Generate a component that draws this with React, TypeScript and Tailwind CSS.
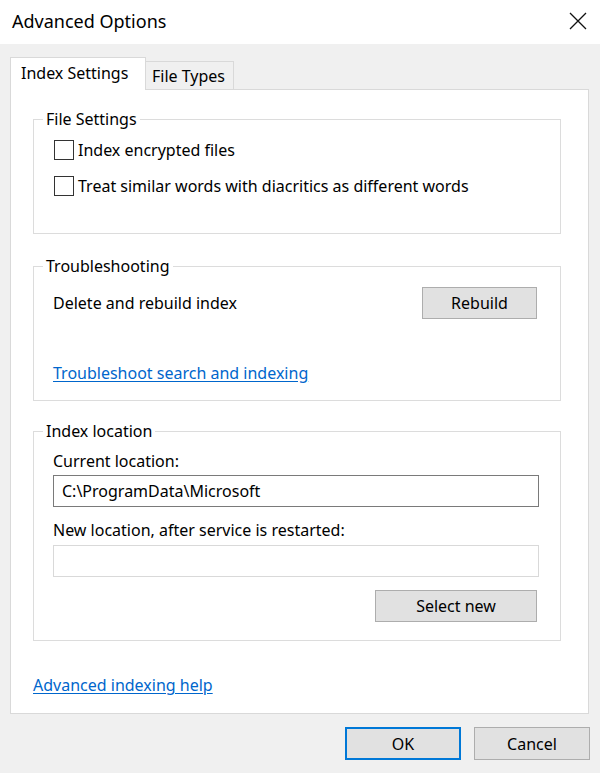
import React from "react";

const font = { fontFamily: '"Noto Sans", "Open Sans", sans-serif' };

function Checkbox({ label }: { label: string }) {
  return (
    <label className="flex h-[20px] items-center">
      <span className="box-border block h-[20px] w-[20px] border border-[#333333] bg-white" />
      <span className="ml-[4px] text-[16px] leading-[20px] text-black">{label}</span>
    </label>
  );
}

function Btn({ children, className = "" }: { children: React.ReactNode; className?: string }) {
  return (
    <button
      className={
        "box-border flex items-center justify-center border border-[#adadad] bg-[#e1e1e1] text-[16px] leading-[20px] text-black " +
        className
      }
    >
      {children}
    </button>
  );
}

function Legend({ children }: { children: React.ReactNode }) {
  return <legend className="ml-[9px] px-[3px] text-[16px] leading-[20px]">{children}</legend>;
}

export default function App() {
  return (
    <div className="flex h-[773px] w-[600px] flex-col bg-[#f0f0f0] text-black" style={font}>
      {/* Title bar */}
      <div className="flex h-[44px] shrink-0 items-center justify-between bg-white pl-[12px] pr-[13px]">
        <span className="-mt-[2px] text-[18px] leading-[22px]">Advanced Options</span>
        <svg width="18" height="18" viewBox="0 0 18 18" className="-mt-[3px]">
          <path d="M1 1 L17 17 M17 1 L1 17" stroke="#111" strokeWidth="1.3" fill="none" />
        </svg>
      </div>

      {/* Tabs */}
      <div className="ml-[10px] mt-[13px] flex h-[32px] items-end">
        <div className="relative z-10 -mb-px box-border flex h-[33px] w-[136px] items-start border border-b-0 border-[#d9d9d9] bg-white pl-[10px] pt-[5px] text-[16px] leading-[20px]">
          Index Settings
        </div>
        <div className="box-border flex h-[28px] w-[88px] items-start border border-b-0 border-l-0 border-[#d9d9d9] bg-[#f0f0f0] pl-[6px] pt-[4px] text-[16px] leading-[20px]">
          File Types
        </div>
      </div>

      {/* Panel */}
      <div className="ml-[10px] box-border flex h-[625px] w-[579px] flex-col border border-[#d9d9d9] bg-white pl-[22px] pr-[27px] pt-[19px]">
        {/* File Settings */}
        <fieldset className="box-border border border-[#dcdcdc]">
          <Legend>File Settings</Legend>
          <div className="flex flex-col gap-[16px] pb-[37px] pl-[20px] pr-[21px] pt-[11px]">
            <Checkbox label="Index encrypted files" />
            <Checkbox label="Treat similar words with diacritics as different words" />
          </div>
        </fieldset>

        {/* Troubleshooting */}
        <fieldset className="mt-[22px] box-border border border-[#dcdcdc]">
          <Legend>Troubleshooting</Legend>
          <div className="pb-[19px] pl-[19px] pr-[21px] pt-[11px]">
            <div className="flex h-[32px] items-center justify-between">
              <span className="text-[16px] leading-[20px]">Delete and rebuild index</span>
              <Btn className="mr-[2px] h-[32px] w-[115px]">Rebuild</Btn>
            </div>
            <div className="mt-[42px] h-[20px]">
              <a className="cursor-pointer text-[16px] leading-[20px] text-[#0066cc] underline underline-offset-2">
                Troubleshoot search and indexing
              </a>
            </div>
          </div>
        </fieldset>

        {/* Index location */}
        <fieldset className="mt-[20px] box-border border border-[#dcdcdc]">
          <Legend>Index location</Legend>
          <div className="pb-[18px] pl-[19px] pr-[21px] pt-[10px]">
            <div className="text-[16px] leading-[20px]">Current location:</div>
            <div className="mt-[4px] box-border flex h-[32px] items-center border border-[#7a7a7a] bg-white pl-[8px] text-[16px] leading-[20px]">
              C:\ProgramData\Microsoft
            </div>
            <div className="mt-[13px] text-[16px] leading-[20px]">New location, after service is restarted:</div>
            <div className="mt-[5px] box-border h-[32px] border border-[#d9d9d9] bg-white" />
            <div className="mt-[13px] flex justify-end">
              <Btn className="mr-[2px] h-[32px] w-[162px]">Select new</Btn>
            </div>
          </div>
        </fieldset>

        <div className="mt-[32px] h-[20px]">
          <a className="cursor-pointer text-[16px] leading-[20px] text-[#0066cc] underline underline-offset-2">
            Advanced indexing help
          </a>
        </div>
      </div>

      {/* Footer buttons */}
      <div className="mt-[13px] flex justify-end gap-[13px] pr-[10px]">
        <button className="box-border flex h-[33px] w-[116px] items-center justify-center border-2 border-[#0078d7] bg-[#e1e1e1] text-[16px] leading-[20px]">
          OK
        </button>
        <Btn className="h-[33px] w-[116px]">Cancel</Btn>
      </div>
    </div>
  );
}
